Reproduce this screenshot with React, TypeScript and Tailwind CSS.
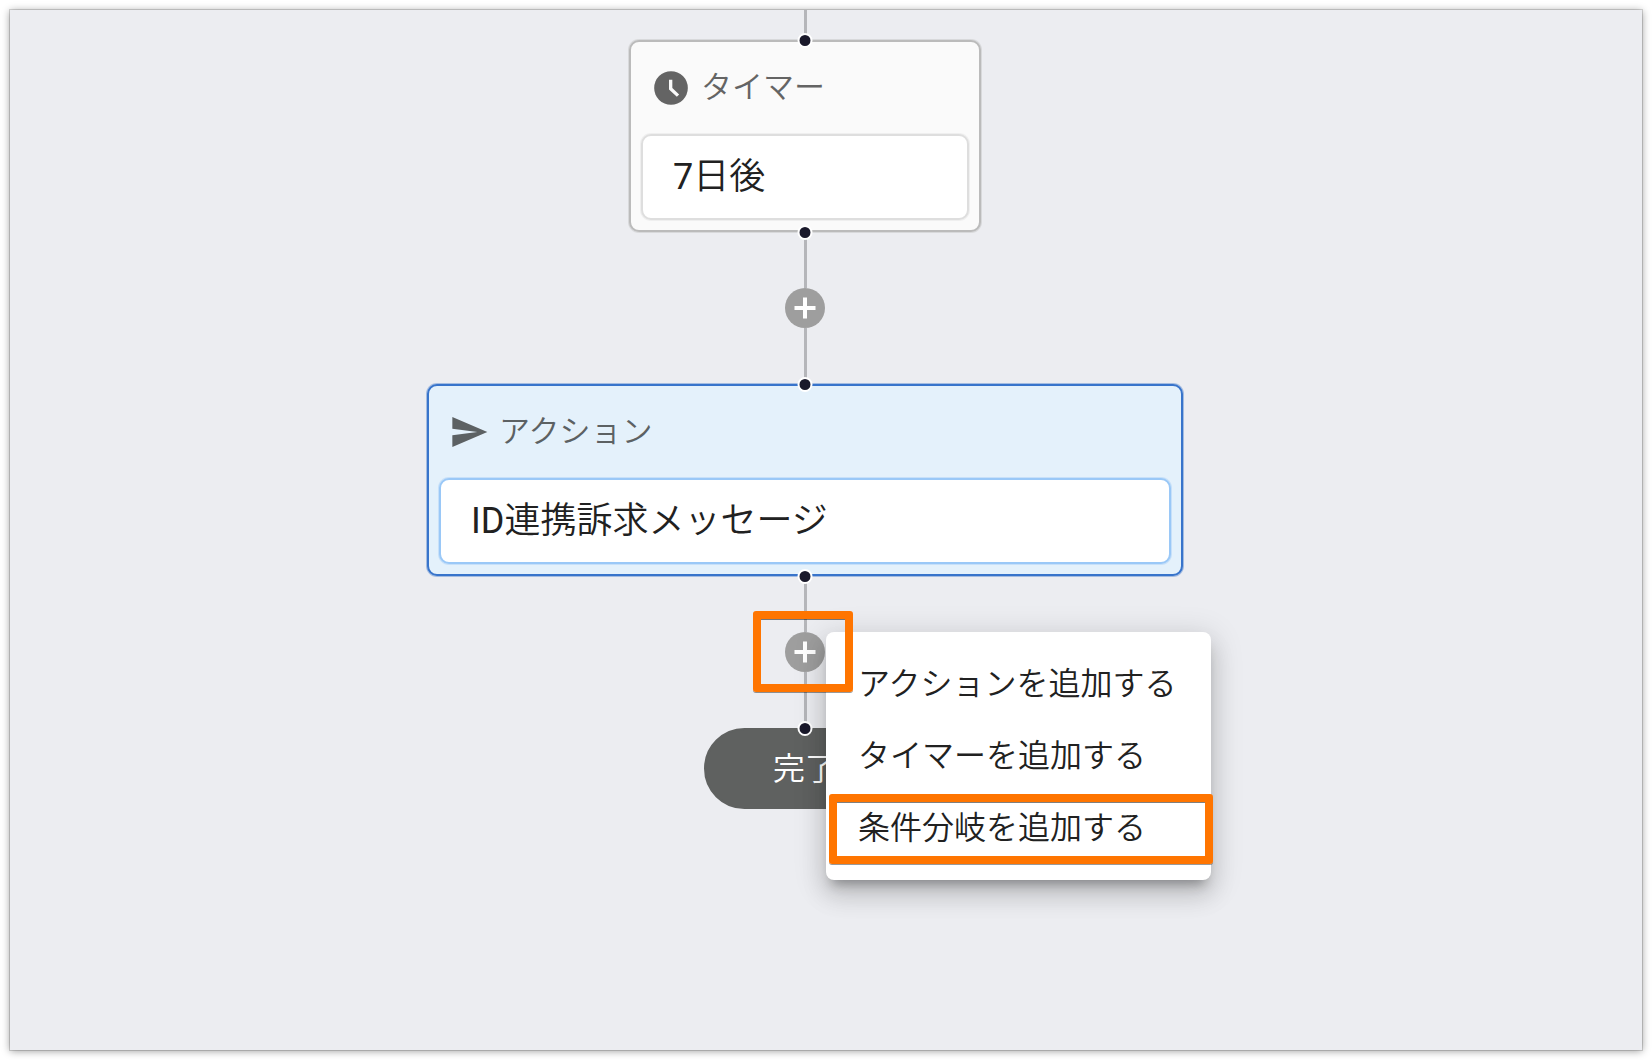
import type { ReactNode } from "react";

function Handle({ edge }: { edge: "top" | "bottom" }) {
  return (
    <span
      className={`absolute left-1/2 z-10 size-[15px] -translate-x-1/2 rounded-full border-2 border-white bg-[#1a192b] ${
        edge === "top" ? "-top-[9px]" : "-bottom-2.5"
      }`}
    />
  );
}

function Edge({ children }: { children?: ReactNode }) {
  return (
    <div className="flex flex-col items-center">
      <div className="h-14 w-[3px] bg-[#b5b6ba]" />
      {children}
      <div className="h-14 w-[3px] bg-[#b5b6ba]" />
    </div>
  );
}

function AddButton() {
  return (
    <button
      type="button"
      aria-label="ステップを追加"
      className="flex size-10 items-center justify-center rounded-full bg-[#9e9e9e] text-white"
    >
      <svg viewBox="0 0 40 40" className="size-10" fill="none" stroke="currentColor" strokeWidth="4">
        <path d="M20 9.5V30.5M9.5 20H30.5" />
      </svg>
    </button>
  );
}

function ClockIcon() {
  return (
    <svg viewBox="0 0 24 24" className="size-10 text-[#646464]">
      <circle cx="12" cy="12" r="10.1" fill="currentColor" />
      <path d="M11.8 7V12.4L16.2 16.6" fill="none" stroke="#fafafa" strokeWidth="2" />
    </svg>
  );
}

function SendIcon() {
  return (
    <svg viewBox="0 0 24 24" className="size-10 text-[#5c6163]" fill="currentColor">
      <path d="M2.01 21L23 12 2.01 3 2 10l15 2-15 2z" />
    </svg>
  );
}

type CardProps = {
  title: string;
  label: ReactNode;
  icon: ReactNode;
  selected?: boolean;
};

function StepCard({ title, label, icon, selected = false }: CardProps) {
  return (
    <section
      className={`relative rounded-[10px] border-2 px-2.5 pb-2.5 ${
        selected
          ? "w-[756px] border-[#3874cb] bg-[#e4f1fb] shadow-[0_0_0_1px_rgba(56,116,203,0.4)]"
          : "w-[352px] border-[#bbbbbb] bg-[#fafafa] shadow-[0_0_0_1px_rgba(187,187,187,0.4)]"
      }`}
    >
      <Handle edge="top" />
      <header className="flex h-[92px] items-center gap-2.5 pl-2.5">
        {icon}
        <h2 className={`text-[31px] leading-10 ${selected ? "text-[#5c6163]" : "text-[#646464]"}`}>{title}</h2>
      </header>
      <button
        type="button"
        className={`flex h-[86px] w-full items-center rounded-[10px] border-2 bg-white px-[30px] text-left text-[36px] text-[#212121] ${
          selected
            ? "border-[#9ac8f7] shadow-[0_0_0_1px_rgba(154,200,247,0.4)]"
            : "border-[#dedede] shadow-[0_0_0_1px_rgba(222,222,222,0.4)]"
        }`}
      >
        <span>{label}</span>
      </button>
      <Handle edge="bottom" />
    </section>
  );
}

const menuItems = ["アクションを追加する", "タイマーを追加する", "条件分岐を追加する"];

function AddMenu() {
  return (
    <div
      role="menu"
      className="absolute top-0 left-full z-20 ml-px w-[385px] rounded-lg bg-white py-4 shadow-[0_10px_12px_-6px_rgba(0,0,0,0.3),0_16px_24px_2px_rgba(0,0,0,0.1),0_6px_30px_5px_rgba(0,0,0,0.12)]"
    >
      {menuItems.map((item, i) => (
        <div key={item} className="relative">
          <button
            type="button"
            role="menuitem"
            className="flex h-[72px] w-full items-center px-8 text-left text-[32px] whitespace-nowrap text-[#212121]"
          >
            {item}
          </button>
          {i === 2 && <Highlight className="top-0.5 -right-0.5 bottom-0 left-[3px]" />}
        </div>
      ))}
    </div>
  );
}

function Highlight({ className }: { className: string }) {
  return (
    <div
      className={`pointer-events-none absolute z-30 rounded-[3px] border-8 border-[#ff7500] shadow-[0_1px_0_rgba(0,0,0,0.4),inset_0_1px_0_rgba(0,0,0,0.5)] ${className}`}
    />
  );
}

export default function App() {
  return (
    <div className="flex min-h-screen bg-white p-2.5 font-['Roboto','Noto_Sans_CJK_JP',sans-serif] font-[350]">
      <main className="flex flex-1 flex-col items-center overflow-hidden bg-[#ecedf1] pr-[42px] shadow-[0_0_0_1px_rgba(0,0,0,0.15),0_1px_8px_rgba(0,0,0,0.4)]">
        <div className="h-[30px] w-[3px] bg-[#b5b6ba]" />
        <StepCard
          title="タイマー"
          label={
            <>
              <span className="font-normal">7</span>日後
            </>
          }
          icon={<ClockIcon />}
        />
        <Edge>
          <AddButton />
        </Edge>
        <StepCard
          title="アクション"
          label={
            <>
              <span className="font-normal">ID</span>連携訴求メッセージ
            </>
          }
          icon={<SendIcon />}
          selected
        />
        <Edge>
          <div className="relative">
            <AddButton />
            <AddMenu />
            <Highlight className="-top-[21px] -right-[28px] -bottom-5 -left-8" />
          </div>
        </Edge>
        <div className="relative flex h-[81px] w-[202px] items-center justify-center rounded-full border-2 border-[#5f6160] bg-[#5f6160] text-[32px] text-white">
          <Handle edge="top" />
          完了
        </div>
      </main>
    </div>
  );
}
